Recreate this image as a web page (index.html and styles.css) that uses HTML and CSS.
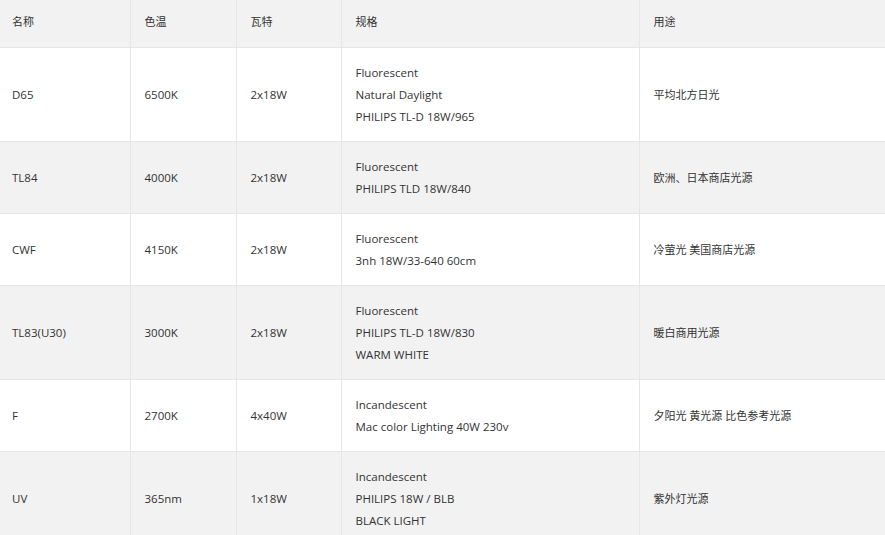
FILE: index.html
```html
<!DOCTYPE html>
<html lang="zh">
<head>
<meta charset="utf-8">
<title>光源</title>
<link rel="stylesheet" href="styles.css">
</head>
<body>
<table class="lights">
  <colgroup>
    <col class="c1"><col class="c2"><col class="c3"><col class="c4"><col class="c5">
  </colgroup>
  <thead>
    <tr><th class="zh">名称</th><th class="zh">色温</th><th class="zh">瓦特</th><th class="zh">规格</th><th class="zh">用途</th></tr>
  </thead>
  <tbody>
    <tr><td>D65</td><td>6500K</td><td>2x18W</td><td><p>Fluorescent</p><p>Natural Daylight</p><p>PHILIPS TL-D 18W/965</p></td><td class="zh">平均北方日光</td></tr>
    <tr class="alt"><td>TL84</td><td>4000K</td><td>2x18W</td><td><p>Fluorescent</p><p>PHILIPS TLD 18W/840</p></td><td class="zh">欧洲、日本商店光源</td></tr>
    <tr><td>CWF</td><td>4150K</td><td>2x18W</td><td><p>Fluorescent</p><p>3nh 18W/33-640 60cm</p></td><td class="zh">冷萤光 美国商店光源</td></tr>
    <tr class="alt"><td>TL83(U30)</td><td>3000K</td><td>2x18W</td><td><p>Fluorescent</p><p>PHILIPS TL-D 18W/830</p><p>WARM WHITE</p></td><td class="zh">暖白商用光源</td></tr>
    <tr><td>F</td><td>2700K</td><td>4x40W</td><td><p>Incandescent</p><p>Mac color Lighting 40W 230v</p></td><td class="zh">夕阳光 黄光源 比色参考光源</td></tr>
    <tr class="alt"><td>UV</td><td>365nm</td><td>1x18W</td><td><p>Incandescent</p><p>PHILIPS 18W / BLB</p><p>BLACK LIGHT</p></td><td class="zh">紫外灯光源</td></tr>
  </tbody>
</table>
</body>
</html>
```
FILE: styles.css
```css
html, body {
  margin: 0;
  padding: 0;
  background: #ffffff;
}
body {
  font-family: "Open Sans", "Noto Sans CJK SC", sans-serif;
  font-size: 11.5px;
  color: #333333;
}
.lights {
  width: 885px;
  table-layout: fixed;
  border-collapse: collapse;
}
.c1 { width: 130px; }
.c2 { width: 106px; }
.c3 { width: 105px; }
.c4 { width: 298px; }
.c5 { width: 246px; }
.lights th,
.lights td {
  text-align: left;
  font-weight: normal;
  line-height: 22px;
  vertical-align: middle;
  border: 1px solid #e6e6e6;
  padding: 14px 14px 13px 14px;
}
.lights th:first-child,
.lights td:first-child {
  border-left: 0;
  padding-left: 12px;
}
.lights th {
  background: #f2f2f2;
  padding-top: 11px;
  padding-bottom: 14px;
  border-top: 0;
}
.lights .zh {
  font-size: 11px;
}
.lights tr.alt td {
  background: #f2f2f2;
}
.lights p {
  margin: 0;
}
```
